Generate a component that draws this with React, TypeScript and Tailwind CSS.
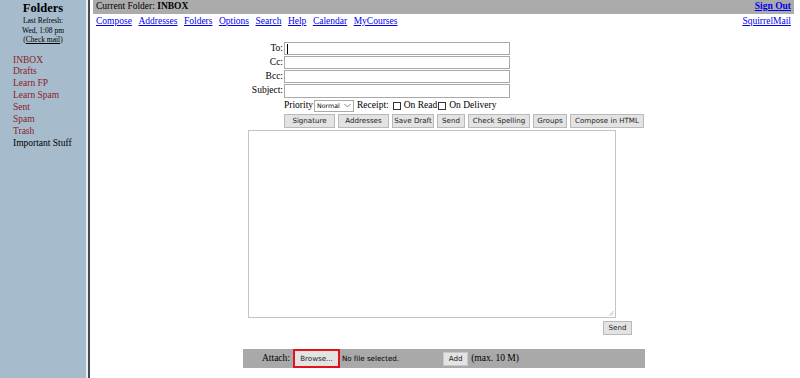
const FOLDERS = [
  { name: "INBOX", special: true },
  { name: "Drafts", special: true },
  { name: "Learn FP", special: true },
  { name: "Learn Spam", special: true },
  { name: "Sent", special: true },
  { name: "Spam", special: true },
  { name: "Trash", special: true },
  { name: "Important Stuff", special: false },
];

const NAV = ["Compose", "Addresses", "Folders", "Options", "Search", "Help", "Calendar", "MyCourses"];

const BUTTONS = [
  { label: "Signature", w: "w-[51px]" },
  { label: "Addresses", w: "w-[51px]" },
  { label: "Save Draft", w: "w-[42px]" },
  { label: "Send", w: "w-[28px]" },
  { label: "Check Spelling", w: "w-[62px]" },
  { label: "Groups", w: "w-[34px]" },
  { label: "Compose in HTML", w: "w-[74px]" },
];

const FIELDS = ["To:", "Cc:", "Bcc:", "Subject:"];

function Btn({ label, className = "" }: { label: string; className?: string }) {
  return (
    <div
      className={`flex h-[14px] shrink-0 items-center justify-center whitespace-nowrap border border-[#b9b9b9] bg-[#e3e3e3] font-['DejaVu_Sans',sans-serif] text-[7.1px] text-[#222] ${className}`}
    >
      {label}
    </div>
  );
}

function Check() {
  return <span className="inline-block h-[8px] w-[8px] border border-[#333] bg-white" />;
}

export default function App() {
  return (
    <div className="flex h-[378px] w-[800px] bg-white font-['Liberation_Serif',serif] text-[9.5px] leading-[11.7px] text-black">
      {/* Left folder list */}
      <div className="flex w-[86px] shrink-0 flex-col items-center bg-[#a6bccd] pt-[1px]">
        <div className="text-[12.5px] font-bold leading-[15px]">Folders</div>
        <div className="text-center text-[7.5px] leading-[9.5px]">
          <div>Last Refresh:</div>
          <div>Wed, 1:08 pm</div>
          <div>
            (<span className="underline">Check mail</span>)
          </div>
        </div>
        <div className="mt-[10px] flex w-full flex-col pl-[13px] leading-[11.9px]">
          {FOLDERS.map((f) => (
            <div key={f.name} className={f.special ? "text-[#8b1c24]" : "text-black"}>
              {f.name}
            </div>
          ))}
        </div>
      </div>
      <div className="w-[2px] shrink-0 bg-[#e8eef2]" />
      <div className="w-[2px] shrink-0 bg-[#4a4a4a]" />

      {/* Main area */}
      <div className="flex flex-1 flex-col">
        <div className="ml-[3px] mr-[6px] flex h-[14px] items-center justify-between bg-[#ababab] px-[3px]">
          <span>
            Current Folder: <b>INBOX</b>
          </span>
          <a className="font-bold text-[#0000ee] underline">Sign Out</a>
        </div>
        <div className="ml-[3px] mr-[6px] mt-[2px] flex items-center justify-between px-[3px]">
          <div className="flex gap-[6.5px]">
            {NAV.map((n) => (
              <a key={n} className="text-[#0000ee] underline">
                {n}
              </a>
            ))}
          </div>
          <a className="text-[#0000ee] underline">SquirrelMail</a>
        </div>

        {/* Header fields */}
        <div className="ml-[153px] mt-[14px] grid grid-cols-[41px_226px]">
          {FIELDS.map((f, i) => (
            <div key={f} className="contents">
              <div className="flex h-[14.1px] items-center justify-end pr-[1px]">{f}</div>
              <div className="my-[0.5px] flex h-[13.1px] items-center border border-[#a9a9a9] bg-white pl-[2px]">
                {i === 0 && <span className="h-[10px] w-[1px] bg-black" />}
              </div>
            </div>
          ))}
        </div>

        {/* Priority / receipt */}
        <div className="ml-[194px] flex h-[15px] items-center">
          <span>Priority</span>
          <div className="ml-[1px] flex h-[12px] w-[40px] items-center justify-between border border-[#a9a9a9] bg-white px-[2px] font-['DejaVu_Sans',sans-serif] text-[6.3px]">
            <span>Normal</span>
            <svg width="7" height="5" viewBox="0 0 7 5">
              <path d="M0.5 1 L3.5 4 L6.5 1" fill="none" stroke="#666" strokeWidth="0.8" />
            </svg>
          </div>
          <span className="ml-[3px]">Receipt:</span>
          <span className="ml-[4px] flex items-center">
            <Check />
          </span>
          <span className="ml-[3px]">On Read</span>
          <span className="ml-[1px] flex items-center">
            <Check />
          </span>
          <span className="ml-[3px]">On Delivery</span>
        </div>

        {/* Action buttons */}
        <div className="ml-[194px] mt-[1px] flex gap-[3px]">
          {BUTTONS.map((b) => (
            <Btn key={b.label} label={b.label} className={b.w} />
          ))}
        </div>

        {/* Body */}
        <div className="relative ml-[158px] mt-[2px] h-[188px] w-[368px] border border-[#c4c4c4] bg-white">
          <svg className="absolute bottom-[1px] right-[1px]" width="6" height="6" viewBox="0 0 6 6">
            <path d="M5.5 1 L1 5.5 M5.5 3 L3 5.5 M5.5 5 L5 5.5" stroke="#aaa" strokeWidth="0.7" />
          </svg>
        </div>

        <div className="ml-[513px] mt-[3px] flex">
          <Btn label="Send" className="w-[29px]" />
        </div>

        {/* Attachments */}
        <div className="ml-[153px] mt-[14px] flex h-[19px] w-[402px] items-center bg-[#a9a9a9]">
          <span className="ml-[19px]">Attach:</span>
          <div className="ml-[3px] flex h-[19px] w-[47px] items-center justify-center border-2 border-[#e3121c] bg-[#e3e3e3] font-['DejaVu_Sans',sans-serif] text-[7.1px] text-[#222]">
            Browse...
          </div>
          <span className="ml-[2px] font-['DejaVu_Sans',sans-serif] text-[7.1px]">No file selected.</span>
          <Btn label="Add" className="ml-[44px] w-[25px] border-[#c8c8c8]" />
          <span className="ml-[3px]">(max. 10 M)</span>
        </div>
      </div>
    </div>
  );
}
